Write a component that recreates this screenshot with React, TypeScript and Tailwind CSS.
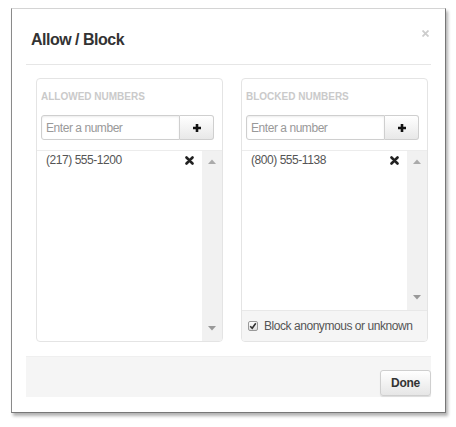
import React from "react";

const font = { fontFamily: '"Liberation Sans", Arial, sans-serif' };

function PlusIcon() {
  return (
    <svg width="10" height="10" viewBox="0 0 10 10">
      <path d="M5 1v8M1 5h8" stroke="#111" strokeWidth="2.6" />
    </svg>
  );
}

function RemoveIcon() {
  return (
    <svg width="9" height="9" viewBox="0 0 9 9">
      <path d="M1.5 1.5l6 6M7.5 1.5l-6 6" stroke="#222" strokeWidth="2.6" strokeLinecap="round" />
    </svg>
  );
}

function Scrollbar() {
  return (
    <div className="flex w-[20px] flex-col items-center justify-between bg-[#f1f1f1] pb-[10px] pt-[8px]">
      <svg width="8" height="5" viewBox="0 0 8 5">
        <path d="M0 5L4 0.5 8 5z" fill="#aaa" />
      </svg>
      <svg width="8" height="5" viewBox="0 0 8 5">
        <path d="M0 0L4 4.5 8 0z" fill="#999" />
      </svg>
    </div>
  );
}

function NumberPanel({
  title,
  number,
  footer,
}: {
  title: string;
  number: string;
  footer?: React.ReactNode;
}) {
  return (
    <div className="flex h-[264px] w-[187px] flex-col overflow-hidden rounded-[4px] border border-[#e4e4e4] bg-white">
      <div className="pl-[4px] pt-[12px] text-[10px] font-bold leading-[12px] text-[#cacaca]">{title}</div>
      <div className="ml-[4px] mr-[8px] mt-[12px] flex h-[25px]">
        <div className="flex w-[139px] items-center rounded-l-[3px] border border-[#cfcfcf] pl-[4px] text-[12px] tracking-[-0.45px] text-[#999] shadow-[inset_0_1px_2px_rgba(0,0,0,0.08)]">
          Enter a number
        </div>
        <button className="flex flex-1 items-center justify-center rounded-r-[3px] border border-l-0 border-[#cfcfcf] bg-gradient-to-b from-white to-[#e8e8e8]">
          <PlusIcon />
        </button>
      </div>
      <div className="mt-[10px] flex flex-1 border-t border-[#ececec]">
        <div className="flex flex-1 items-start justify-between pl-[9px] pr-[8px] pt-[2px]">
          <span className="text-[12px] leading-[14px] tracking-[-0.45px] text-[#555]">{number}</span>
          <span className="pt-[3px]">
            <RemoveIcon />
          </span>
        </div>
        <Scrollbar />
      </div>
      {footer}
    </div>
  );
}

export default function App() {
  return (
    <div className="h-[427px] w-[456px] bg-white pl-[11px] pt-[8px]" style={font}>
      <div className="flex h-[405px] w-[435px] flex-col border border-b-[#777] border-l-[#8a8a8a] border-r-[#777] border-t-[#d4d4d4] bg-white shadow-[2px_3px_3px_rgba(0,0,0,0.3)]">
        <div className="mx-[14px] flex h-[56px] justify-between border-b border-[#e6e6e6]">
          <h3 className="pl-[5px] pt-[21px] text-[16px] font-bold leading-[19px] tracking-[-0.5px] text-[#333]">
            Allow / Block
          </h3>
          <svg className="mr-[2px] mt-[21px]" width="7" height="7" viewBox="0 0 7 7">
            <path d="M0.5 0.5l6 6M6.5 0.5l-6 6" stroke="#cdcdcd" strokeWidth="1.8" />
          </svg>
        </div>

        <div className="flex gap-[18px] pl-[24px] pt-[13px]">
          <NumberPanel title="ALLOWED NUMBERS" number="(217) 555-1200" />
          <NumberPanel
            title="BLOCKED NUMBERS"
            number="(800) 555-1138"
            footer={
              <div className="flex h-[31px] items-center gap-[6px] border-t border-[#e8e8e8] bg-[#f5f5f5] pl-[6px] text-[12px] tracking-[-0.45px] text-[#555]">
                <span className="flex h-[10px] w-[10px] items-center justify-center rounded-[2px] border border-[#999] bg-gradient-to-b from-white to-[#ddd]">
                  <svg width="8" height="8" viewBox="0 0 8 8">
                    <path d="M1.2 4.2l2 2 3.6-5" stroke="#333" strokeWidth="1.6" fill="none" />
                  </svg>
                </span>
                Block anonymous or unknown
              </div>
            }
          />
        </div>

        <div className="mx-[14px] mt-[14px] flex h-[41px] items-end justify-end border-t border-[#efefef] bg-[#f5f5f5]">
          <button className="mb-[1px] h-[26px] w-[51px] rounded-[3px] border border-[#cfcfcf] bg-gradient-to-b from-white to-[#e6e6e6] text-[12px] font-bold tracking-[-0.3px] text-[#333] shadow-[0_1px_1px_rgba(0,0,0,0.1)]">
            Done
          </button>
        </div>
      </div>
    </div>
  );
}
